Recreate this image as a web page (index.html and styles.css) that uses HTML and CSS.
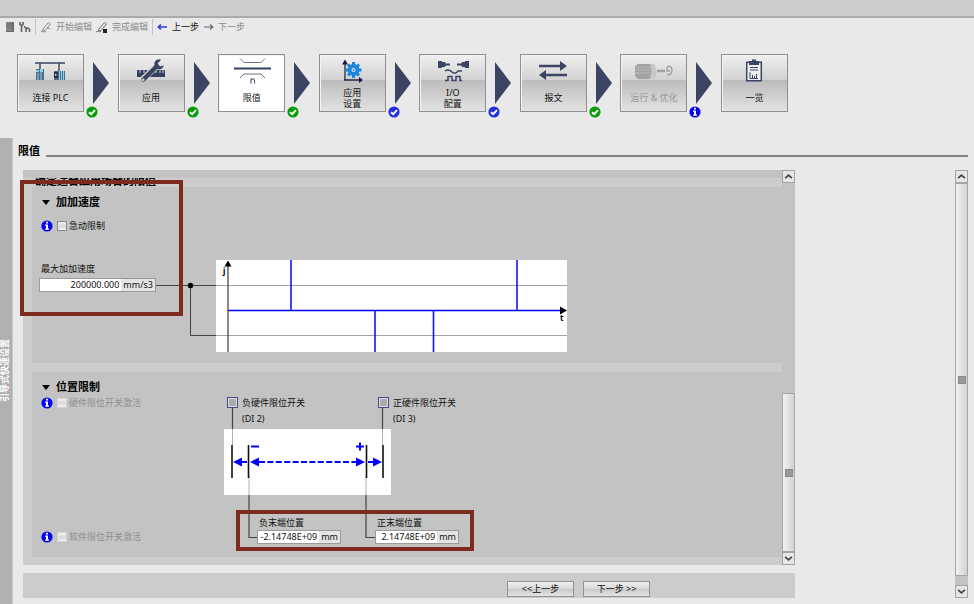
FILE: index.html
```html
<!DOCTYPE html>
<html lang="zh-CN">
<head>
<meta charset="utf-8">
<title>限值</title>
<link rel="stylesheet" href="styles.css">
</head>
<body>
<svg class="defs" aria-hidden="true">
  <defs>
    <symbol id="ok-green" viewBox="0 0 12 12"><circle cx="6" cy="6" r="5.6" fill="#0a9c0a"/><path d="M3 6.2 5.2 8.2 9 4.2" fill="none" stroke="#fff" stroke-width="1.9"/></symbol>
    <symbol id="ok-blue" viewBox="0 0 12 12"><circle cx="6" cy="6" r="5.6" fill="#2330dc"/><path d="M3 6.2 5.2 8.2 9 4.2" fill="none" stroke="#fff" stroke-width="1.9"/></symbol>
    <symbol id="info" viewBox="0 0 12 12"><circle cx="6" cy="6" r="5.6" fill="#0404f4"/><path d="M5 1.8h2v1.8H5zM4.2 4.6H7v3.8h1v1.4H4.2V8.4H5V6h-.8z" fill="#fff"/></symbol>
    <symbol id="arrow" viewBox="0 0 16 42"><path d="M0 0 16 21 0 42z" fill="#3b4463"/></symbol>
    <symbol id="up" viewBox="0 0 8 8"><path d="M1 5.5 4 2.8 7 5.5" fill="none" stroke="#444" stroke-width="1.6"/></symbol>
    <symbol id="down" viewBox="0 0 8 8"><path d="M1 2.5 4 5.2 7 2.5" fill="none" stroke="#444" stroke-width="1.6"/></symbol>
  </defs>
</svg>

<header class="titlebar"></header>
<nav class="toolbar" aria-label="工具栏">
  <button class="tool" aria-label="参数"><svg width="10" height="12" viewBox="0 0 10 12"><path d="M1 1h8v10H1z" fill="#6b6b6b"/><path d="M1 1h6v9H1z" fill="#858585"/><path d="M2 3h5M2 5h5M2 7h5" stroke="#696969" stroke-width=".7"/></svg></button>
  <button class="tool" aria-label="工具"><svg width="12" height="12" viewBox="0 0 12 12"><path d="M1 1v2.500l1.500 1V11M4 1v2.500L2.500 5M5 5.500l2 1.500v4M7 7.500c3-1 4 .5 3.500 3.500" fill="none" stroke="#666" stroke-width="1.700"/></svg></button>
  <span class="rule"></span>
  <button class="tool" disabled><svg width="12" height="12" viewBox="0 0 12 12"><path d="M3 8 8.500 1.500l2 1.500L5 9.500 2.500 10zM1 11c2-2 3 1 5-.5M7 7l3 .5" fill="none" stroke="#8a8a8a"/></svg>开始编辑</button>
  <button class="tool" disabled><svg width="12" height="12" viewBox="0 0 12 12"><path d="M3 8 8.500 1.500l2 1.500L5 9.500 2.500 10zM0 11c2-2 3 .5 5-.5" fill="none" stroke="#707070"/><path d="M7 8h4v4H7z" fill="#222"/></svg>完成编辑</button>
  <span class="rule"></span>
  <button class="tool"><svg width="11" height="10" viewBox="0 0 11 10"><path d="M1 5h9M4 2.500 1.200 5 4 7.500" fill="none" stroke="#2b3bd6" stroke-width="1.400"/></svg>上一步</button>
  <button class="tool" disabled><svg width="11" height="10" viewBox="0 0 11 10"><path d="M1 5h8M7 2.500 9.800 5 7 7.500" fill="none" stroke="#666" stroke-width="1.200"/></svg>下一步</button>
</nav>

<nav class="steps" aria-label="步骤">
  <button class="step"><svg width="40" height="28" viewBox="0 0 40 28"><path d="M4 7h30M9 7v7M28 7v8" stroke="#3b4463" stroke-width="1.400" fill="none"/><path d="M5 13h8v11H5z" fill="#4d6c87"/><path d="M5 14h3v2H5zM9 13h3v3H9z" fill="#8ed4ea"/><path d="M7 17v7M10 16v8" stroke="#9cc5d8"/><path d="M23 15h11v9H23z" fill="#4d6c87"/><path d="M23 16h4v6h-4z" fill="#273047"/><path d="M24 18h1.500v1.500H24z" fill="#fff"/><path d="M28.500 15v9M30.500 15v9M32.500 15v9" stroke="#8ed4ea"/></svg><span>连接 PLC</span></button>
  <div class="link"><svg class="tri"><use href="#arrow"/></svg><svg class="badge"><use href="#ok-green"/></svg></div>
  <button class="step"><svg width="40" height="28" viewBox="0 0 40 28"><path d="M6 14h28v7H6z" fill="#35405f"/><path d="M9 14v3M13 14v3M17 14v3M25 14v3M29 14v3M32 14v3" stroke="#cdd0d8"/><path d="M12 23 26 10" stroke="#d5d5d5" stroke-width="6"/><path d="M12.500 23.500 26 10" stroke="#3b4463" stroke-width="4.400" stroke-linecap="round"/><path d="M30 3.500c-5-1-8 3-6 7s7 4 9-1l-4 1-2.500-2.500z" fill="#3b4463"/><circle cx="12.300" cy="23.700" r="1.200" fill="#ddd"/></svg><span>应用</span></button>
  <div class="link"><svg class="tri"><use href="#arrow"/></svg><svg class="badge"><use href="#ok-green"/></svg></div>
  <button class="step current"><svg width="40" height="28" viewBox="0 0 40 28"><path d="M8 2.500 12 6.500h17l4-4M8 22l4-4h17l4 4" fill="none" stroke="#6b7287"/><path d="M2 12.500h37" stroke="#35405f" stroke-width="2"/><path d="M19 27.500v-5M19 23.500c1-1 3.500-1 3.500 1v3" stroke="#59617c" stroke-width="1.200" fill="none"/></svg><span>限值</span></button>
  <div class="link"><svg class="tri"><use href="#arrow"/></svg><svg class="badge"><use href="#ok-green"/></svg></div>
  <button class="step two"><svg width="40" height="28" viewBox="0 0 40 28"><path d="M13 7v17M12 24h17" stroke="#222a4d" stroke-width="1.300"/><path d="m10 8.500 3-5 3 5zM27 21l4 3-4 3z" fill="#14194a"/><g stroke="#1b86e0" stroke-width="3"><path d="M21.500 6v16M13.500 14h16M16 8.500l11 11M27 8.500l-11 11"/></g><circle cx="21.500" cy="14" r="6" fill="#1b86e0"/><circle cx="21.500" cy="14" r="2" fill="#d8e4ee"/><circle cx="21.500" cy="14" r=".8" fill="#1b4b90"/></svg><span>应用<br>设置</span></button>
  <div class="link"><svg class="tri"><use href="#arrow"/></svg><svg class="badge"><use href="#ok-blue"/></svg></div>
  <button class="step two"><svg width="40" height="28" viewBox="0 0 40 28"><path d="M5 5h4v7H5zM8 6h4l1 2.500-1 2.500H8zM36 5h-4v7h4zM33 6h-4l-1 2.500 1 2.500h4z" fill="#3b4463"/><path d="M12 8.500h5M24 8.500h5" stroke="#3b4463" stroke-width="2"/><path d="M12 15c3-2 5-1 7 1s5 1 6-1h4" fill="none" stroke="#3b4463" stroke-width="1.500"/><path d="M12 24.500h3v-4h4v4h4v-4h4v4h2" fill="none" stroke="#3b4463" stroke-width="1.500"/></svg><span>I/O<br>配置</span></button>
  <div class="link"><svg class="tri"><use href="#arrow"/></svg><svg class="badge"><use href="#ok-blue"/></svg></div>
  <button class="step"><svg width="40" height="28" viewBox="0 0 40 28"><path d="M6 10h22M12 19h22" stroke="#3b4463" stroke-width="2.600"/><path d="m27 5 7 5-7 5zM13 14l-7 5 7 5z" fill="#3b4463"/></svg><span>报文</span></button>
  <div class="link"><svg class="tri"><use href="#arrow"/></svg><svg class="badge"><use href="#ok-green"/></svg></div>
  <button class="step" disabled><svg width="44" height="28" viewBox="0 0 44 28"><path d="M3 10 6 8h14l3 2v11l-3 2H6l-3-3z" fill="#a3a3a3"/><path d="M3 14h16M3 17h16M4 11h15" stroke="#b8b8b8"/><path d="M18 8h4l2 4v8l-2 3h-5c3-4 3-10 1-15z" fill="#c8c8c8"/><path d="M25 15h8" stroke="#a0a0a0" stroke-width="2.500"/><path d="M35 12c1-3 5-2 5 2s-3 6-5 4M35 12v3h3" fill="none" stroke="#a0a0a0" stroke-width="1.400"/></svg><span>运行 &amp; 优化</span></button>
  <div class="link"><svg class="tri"><use href="#arrow"/></svg><svg class="badge"><use href="#info"/></svg></div>
  <button class="step"><svg width="40" height="28" viewBox="0 0 40 28"><path d="M11.700 6.200h14.600v18.600H11.700z" fill="#eee" stroke="#3b4463" stroke-width="1.500"/><path d="M14 5h3V3.500h4V5h3v4H14z" fill="#3b4463"/><path d="M15 11.500h8M15 14h8" stroke="#3b4463"/><path d="M15 16v6.500h8M17.500 22v-3M19.500 22v-2M21.500 22v-4" fill="none" stroke="#3b4463"/></svg><span>一览</span></button>
</nav>

<div class="workspace">
  <aside class="rail"><span>引导式快速设置</span></aside>
  <main class="page">
    <div class="heading"><h1>限值</h1><hr></div>
    <div class="area">
      <div class="content">
        <div class="viewport">
          <div class="sheet">
            <div class="intro"><p>确定适合应用场合的限值</p></div>
            <section class="card jerk">
              <h2>加加速度</h2>
              <div class="option"><svg class="info"><use href="#info"/></svg><input type="checkbox" id="jerk"><label for="jerk">急动限制</label></div>
              <div class="plot-row">
                <div class="max-field">
                  <label for="maxjerk">最大加加速度</label>
                  <div class="field wide"><input id="maxjerk" type="text" value="200000.000"><span>mm/s3</span></div>
                </div>
                <svg class="plot" width="412" height="92" viewBox="0 0 412 92">
                  <path d="M60 0h351v92H60z" fill="#fff"/>
                  <path d="M0 25.500h60M34.500 25.500v50H60" fill="none" stroke="#444"/>
                  <circle cx="34.500" cy="25.500" r="2.800" fill="#000"/>
                  <path d="M60 25.500h351M60 75.500h351" stroke="#a2a2a2"/>
                  <path d="M72 5v87" stroke="#555" stroke-width="1.400"/>
                  <path d="m68.500 6.500 3.500-6 3.500 6zM404 46.500v8l7-4z" fill="#000"/>
                  <path d="M72 50.500h332" stroke="#00f" stroke-width="1.500"/>
                  <path d="M135 0v50M361 0v50M219 50v42M277.500 50v42" stroke="#1414f4" stroke-width="1.600"/>
                  <text x="67" y="14">j</text><text x="404" y="61">t</text>
                </svg>
              </div>
            </section>
            <section class="card position">
              <h2>位置限制</h2>
              <div class="columns">
                <div class="options">
                  <div class="option"><svg class="info"><use href="#info"/></svg><input type="checkbox" id="hw" disabled><label for="hw">硬件限位开关激活</label></div>
                  <div class="option"><svg class="info"><use href="#info"/></svg><input type="checkbox" id="sw" disabled><label for="sw">软件限位开关激活</label></div>
                </div>
                <div class="diagram">
                  <svg class="axis" width="250" height="150" viewBox="0 0 250 150">
                    <path d="M0 33h167v66H0z" fill="#fff"/>
                    <path d="M8.500 12v21M158.500 12v21M25 99v42.500h9M142 99v42.500h9" fill="none" stroke="#444" stroke-width="1.200"/>
                    <path d="M8.500 33v16M158.500 33v16M25 80v19M142 80v19" stroke="#b0b0b0"/>
                    <path d="M8 49v33M24.500 49v33M142.500 49v33M159 49v33" stroke="#111" stroke-width="1.600"/>
                    <path d="m9 66 9-4.500v9zM26 66l9-4.500v9zM141 66l-9-4.500v9zM158 66l-9-4.500v9z" fill="#00f"/>
                    <path d="M17 66h6M144 66h6" stroke="#00f" stroke-width="2"/>
                    <path d="M35 66h98" stroke="#00f" stroke-width="2" stroke-dasharray="6 2.400"/>
                    <path d="M27 50.500h8M132 50.500h8M136 46.500v8" stroke="#00f" stroke-width="2"/>
                  </svg>
                  <div class="switches">
                    <div class="switch"><button aria-label="负硬件限位开关"></button><div>负硬件限位开关<small>(DI 2)</small></div></div>
                    <div class="switch"><button aria-label="正硬件限位开关"></button><div>正硬件限位开关<small>(DI 3)</small></div></div>
                  </div>
                  <div class="ends">
                    <div><label for="neg">负末端位置</label><div class="field"><input id="neg" type="text" value="-2.14748E+09"><span>mm</span></div></div>
                    <div><label for="pos">正末端位置</label><div class="field"><input id="pos" type="text" value="2.14748E+09"><span>mm</span></div></div>
                  </div>
                </div>
              </div>
            </section>
          </div>
          <div class="scroll">
            <button aria-label="向上"><svg><use href="#up"/></svg></button>
            <div class="track low"><i></i></div>
            <button aria-label="向下"><svg><use href="#down"/></svg></button>
          </div>
          <div class="mark mark-jerk"></div>
          <div class="mark mark-ends"></div>
        </div>
        <footer class="actions"><button>&lt;&lt;上一步</button><button>下一步 &gt;&gt;</button></footer>
      </div>
      <div class="scroll outer">
        <button aria-label="向上"><svg><use href="#up"/></svg></button>
        <div class="track high"><i></i></div>
        <button aria-label="向下"><svg><use href="#down"/></svg></button>
      </div>
    </div>
  </main>
</div>
</body>
</html>
```

FILE: styles.css
```css
* { box-sizing: border-box; }
html, body { height: 100%; }
body {
  margin: 0;
  display: flex;
  flex-direction: column;
  overflow: hidden;
  background: #e9e9e9;
  color: #111;
  font: 9px/12px "Noto Sans", "Noto Sans CJK SC", sans-serif;
}
button, input { font: inherit; color: inherit; margin: 0; padding: 0; border: 0; background: none; }
h1, h2, p { margin: 0; font-size: 11px; line-height: 14px; color: #000; }
.defs { position: absolute; width: 0; height: 0; }

.titlebar { flex: none; height: 18px; background: #ccc; border-bottom: 2px solid #aaa; }
.toolbar { flex: none; display: flex; align-items: center; height: 18px; padding-left: 5px; gap: 4px; }
.tool { display: flex; align-items: center; gap: 4px; white-space: nowrap; }
.tool:disabled { color: #8c8c8c; }
.rule { width: 1px; height: 16px; background: #c4c4c4; }

.steps { flex: none; display: flex; max-width: 788px; padding: 18px 0 0 17px; }
.step {
  flex: none;
  display: flex;
  flex-direction: column;
  align-items: center;
  width: 67px;
  height: 58px;
  padding-top: 1px;
  border: 1px solid #8f8f8f;
  background: linear-gradient(#f0f0f0, #d2d2d2 44%, #bcbcbc 45%, #e2e2e2);
  box-shadow: inset 1px 1px #f4f4f4;
}
.step span { margin-top: 8px; line-height: 12px; white-space: nowrap; }
.step.two span { margin-top: 3px; line-height: 11px; }
.step.current { background: #fff; }
.step:disabled { color: #999; }
.link { position: relative; flex: 1; padding: 8px 0 0 9px; }
.tri { display: block; width: 16px; height: 42px; }
.badge { position: absolute; left: 2px; top: 52px; width: 12px; height: 12px; }

.workspace { flex: 1; display: flex; margin-top: 26px; min-height: 0; }
.rail { flex: none; width: 13px; background: #b0b0b0; border-right: 1px solid #c8c8c8; display: flex; align-items: center; }
.rail span { writing-mode: vertical-rl; text-orientation: sideways; transform: rotate(180deg); color: #fff; font-weight: bold; line-height: 10px; white-space: nowrap; }
.page { flex: 1; min-width: 0; padding: 6px 6px 0 5px; }
.heading { display: flex; align-items: center; gap: 6px; height: 14px; }
.heading hr { flex: 1; margin: 9px 0 0; border: 0; height: 2px; background: #828282; }
.area { display: flex; justify-content: space-between; padding: 12px 0 0 5px; }
.content { flex: 0 1 772px; display: flex; flex-direction: column; gap: 8px; }
.viewport { position: relative; display: flex; background: #ccc; }
.sheet { flex: 1; padding-bottom: 8px; }
.intro { height: 17px; border-top: 8px solid #c3c3c3; padding-left: 12px; overflow: hidden; }
.intro p { margin-top: -4px; font-weight: bold; }
.card { margin-left: 9px; padding: 8px 0 0 7px; background: #c3c3c3; }
.card h2 { display: flex; align-items: center; gap: 6px; padding-left: 3px; }
.card h2::before { content: ""; border: 4px solid transparent; border-top: 5px solid #000; border-bottom: 0; }
.jerk { height: 176px; }
.position { height: 185px; margin-top: 9px; }

.option { display: flex; align-items: center; height: 12px; padding-left: 2px; }
.info { width: 12px; height: 12px; margin-right: 4px; }
.option input {
  appearance: none;
  width: 10px;
  height: 10px;
  margin-right: 2px;
  border: 1px solid #8a8a8a;
  background: linear-gradient(#f2f2f2, #d8d8d8 50%, #f2f2f2);
}
.option input:disabled { border-color: #d4d4d4; }
.option input:disabled + label { color: #8f8f8f; }
.jerk .option { margin-top: 11px; }
.plot-row { display: flex; margin-top: 28px; }
.max-field { flex: none; width: 117px; padding-top: 3px; }
.max-field label { display: block; padding-left: 2px; }
.field { display: flex; width: 84px; height: 14px; border: 1px solid #9a9a9a; background: #e4e4e4; line-height: 12px; }
.field.wide { width: 117px; margin-top: 3px; }
.field input { flex: 1; min-width: 0; background: #fff; text-align: right; padding-right: 2px; }
.field span { padding: 0 2px; }
.plot { flex: none; }
.plot text { font: bold 8px "Noto Sans", sans-serif; }

.columns { display: flex; }
.options { flex: none; width: 185px; display: flex; flex-direction: column; gap: 122px; padding-top: 3px; }
.diagram { position: relative; width: 250px; height: 150px; padding-top: 1px; margin-top: 2px; }
.axis { position: absolute; left: 0; top: 0; }
.switches, .ends { position: relative; display: flex; }
.switches { padding-left: 3px; }
.switch { flex: none; display: flex; align-items: flex-start; gap: 4px; width: 151px; }
.switch button { width: 11px; height: 11px; border: 1px solid #454a86; background: #aaa; box-shadow: inset 0 0 0 1px #ddd; }
.switch small { display: block; margin-top: 4px; font-size: inherit; }
.ends { padding: 91px 0 0 33px; gap: 34px; }
.ends label { display: block; padding-left: 2px; line-height: 14px; }

.scroll { flex: none; width: 13px; display: flex; flex-direction: column; background: #c3c3c3; }
.scroll button { height: 13px; display: grid; place-items: center; border: 1px solid #a2a2a2; background: #e6e6e6; }
.scroll svg { width: 9px; height: 9px; }
.track { flex: 1; display: flex; }
.track i { flex: 1; display: grid; place-items: center; border: 1px solid #a6a6a6; background: linear-gradient(90deg, #f2f2f2, #d2d2d2); }
.track i::before { content: ""; width: 6px; height: 6px; background: #999; border: 1px solid #8a8a8a; }
.track.low { padding-top: 210px; }
.track.high { padding-bottom: 9px; }

.mark { position: absolute; border: 4px solid #7d2b1e; pointer-events: none; }
.mark-jerk { left: -3px; top: 10px; width: 163px; height: 136px; }
.mark-ends { left: 213px; top: 340px; width: 238px; height: 41px; }

.actions { display: flex; justify-content: flex-end; gap: 9px; padding: 8px 145px 0 0; height: 25px; background: #ccc; }
.actions button { width: 67px; height: 16px; border: 1px solid #929292; background: linear-gradient(#f0f0f0, #d8d8d8 48%, #c8c8c8 50%, #e4e4e4); }
```
